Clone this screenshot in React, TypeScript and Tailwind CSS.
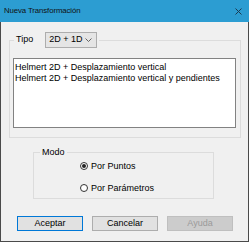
import { useState } from "react";

const font = { fontFamily: '"Liberation Sans", Arial, sans-serif' };

function Radio({ checked, label, onClick }: { checked: boolean; label: string; onClick: () => void }) {
  return (
    <button onClick={onClick} className="flex items-center h-[12px] gap-[3px] text-[9px] leading-[12px] text-black">
      <span className="w-[8px] h-[8px] rounded-full border border-[#333] bg-white flex items-center justify-center">
        {checked && <span className="w-[4px] h-[4px] rounded-full bg-[#222]" />}
      </span>
      <span>{label}</span>
    </button>
  );
}

export default function App() {
  const [mode, setMode] = useState("puntos");
  const items = [
    "Helmert 2D + Desplazamiento vertical",
    "Helmert 2D + Desplazamiento vertical y pendientes",
  ];

  return (
    <div className="w-[249px] h-[242px] flex flex-col bg-[#f0f0f0]" style={font}>
      {/* Title bar */}
      <div className="h-[22px] shrink-0 bg-[#2c9dd2] flex items-center justify-between pl-[4px] pr-[6px]">
        <span className="text-[7.8px] text-[#111] tracking-[-0.1px]">Nueva Transformación</span>
        <svg width="7" height="7" viewBox="0 0 7 7" className="mr-[1px]">
          <path d="M0.5 0.5 L6.5 6.5 M6.5 0.5 L0.5 6.5" stroke="#1b3b52" strokeWidth="1" />
        </svg>
      </div>

      <div className="flex-1 flex flex-col border-l border-r border-b border-[#4a4a4a]">
        {/* Tipo group */}
        <fieldset className="mt-[10px] ml-[8px] w-[232px] border border-[#dcdcdc] pl-[3px] pr-[4px] pb-[9px]">
          <legend className="ml-[1px] px-[2px] flex items-center gap-[12px] text-[9px] text-black">
            <span>Tipo</span>
            <span className="h-[16px] w-[52px] flex items-center justify-between pl-[3px] pr-[4px] bg-[#e5e5e5] border border-[#adadad]">
              <span>2D + 1D</span>
              <svg width="7" height="4" viewBox="0 0 7 4">
                <path d="M0.5 0.5 L3.5 3.5 L6.5 0.5" fill="none" stroke="#555" strokeWidth="0.9" />
              </svg>
            </span>
          </legend>
          <div className="mt-[10px] h-[70px] bg-white border border-[#828282] pl-[1px] pt-[3px]">
            {items.map((t) => (
              <div key={t} className="text-[9px] leading-[11px] text-black whitespace-nowrap">
                {t}
              </div>
            ))}
          </div>
        </fieldset>

        {/* Modo group */}
        <fieldset className="mt-[8px] ml-[32px] w-[181px] border border-[#dcdcdc] pl-[46px] pb-[4px]">
          <legend className="ml-[-40px] px-[2px] text-[9px] leading-[12px] text-black">Modo</legend>
          <div className="flex flex-col gap-[10px] pt-[2px]">
            <Radio checked={mode === "puntos"} label="Por Puntos" onClick={() => setMode("puntos")} />
            <Radio checked={mode === "param"} label="Por Parámetros" onClick={() => setMode("param")} />
          </div>
        </fieldset>

        {/* Buttons */}
        <div className="mt-[17px] ml-[16px] flex gap-[9px] text-[9px]">
          <button className="w-[66px] h-[15px] bg-[#e1e1e1] border border-[#0078d7] text-black leading-none">
            Aceptar
          </button>
          <button className="w-[66px] h-[15px] bg-[#e1e1e1] border border-[#adadad] text-black leading-none">
            Cancelar
          </button>
          <button className="w-[66px] h-[15px] bg-[#cccccc] border border-[#bfbfbf] text-[#9a9a9a] leading-none">
            Ayuda
          </button>
        </div>
      </div>
    </div>
  );
}
